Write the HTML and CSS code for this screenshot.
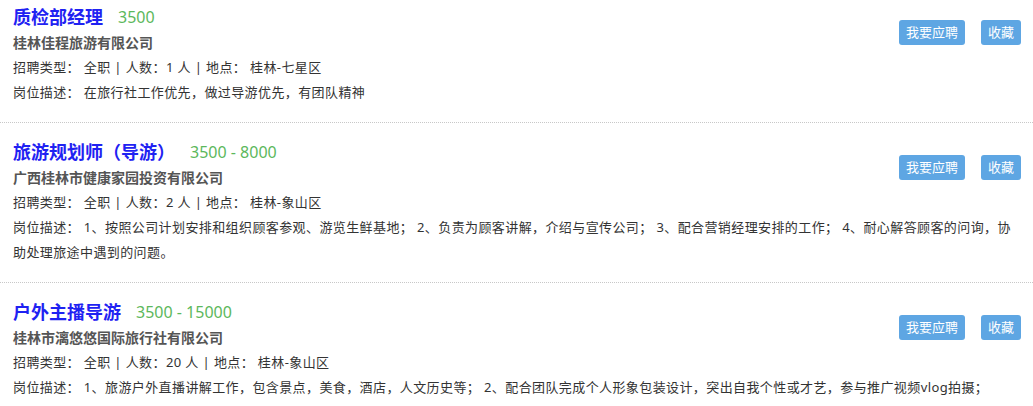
FILE: index.html
```html
<!DOCTYPE html>
<html lang="zh-CN">
<head>
<meta charset="utf-8">
<title>职位列表</title>
<link rel="stylesheet" href="styles.css">
</head>
<body>
<ul class="job-list">
  <li class="job">
    <div class="job-top">
      <div class="job-info">
        <div class="job-title"><a class="job-name">质检部经理</a><span class="salary">3500</span></div>
        <div class="company">桂林佳程旅游有限公司</div>
        <div class="meta">招聘类型： 全职 | 人数：1 人 | 地点： 桂林-七星区</div>
      </div>
      <div class="actions">
        <button class="btn">我要应聘</button>
        <button class="btn">收藏</button>
      </div>
    </div>
    <div class="desc">岗位描述： 在旅行社工作优先，做过导游优先，有团队精神</div>
  </li>
  <li class="job">
    <div class="job-top">
      <div class="job-info">
        <div class="job-title"><a class="job-name">旅游规划师（导游）</a><span class="salary">3500 - 8000</span></div>
        <div class="company">广西桂林市健康家园投资有限公司</div>
        <div class="meta">招聘类型： 全职 | 人数：2 人 | 地点： 桂林-象山区</div>
      </div>
      <div class="actions">
        <button class="btn">我要应聘</button>
        <button class="btn">收藏</button>
      </div>
    </div>
    <div class="desc">岗位描述： 1、按照公司计划安排和组织顾客参观、游览生鲜基地； 2、负责为顾客讲解，介绍与宣传公司； 3、配合营销经理安排的工作； 4、耐心解答顾客的问询，协助处理旅途中遇到的问题。</div>
  </li>
  <li class="job">
    <div class="job-top">
      <div class="job-info">
        <div class="job-title"><a class="job-name">户外主播导游</a><span class="salary">3500 - 15000</span></div>
        <div class="company">桂林市漓悠悠国际旅行社有限公司</div>
        <div class="meta">招聘类型： 全职 | 人数：20 人 | 地点： 桂林-象山区</div>
      </div>
      <div class="actions">
        <button class="btn">我要应聘</button>
        <button class="btn">收藏</button>
      </div>
    </div>
    <div class="desc">岗位描述： 1、旅游户外直播讲解工作，包含景点，美食，酒店，人文历史等； 2、配合团队完成个人形象包装设计，突出自我个性或才艺，参与推广视频vlog拍摄；</div>
  </li>
</ul>
</body>
</html>
```

FILE: styles.css
```css
html, body {
  margin: 0;
  padding: 0;
  background: #fff;
}

body {
  font-family: "Noto Sans", "Noto Sans CJK SC", sans-serif;
  color: #333;
  font-size: 13px;
}

.job-list {
  list-style: none;
  margin: 0;
  padding: 0;
}

.job {
  padding: 16px 12px 17px 13px;
  border-bottom: 1px dotted #c8c8c8;
}

.job:first-child {
  padding-top: 4px;
}

.job-top {
  display: flex;
  align-items: flex-start;
}

.job-info {
  flex: 1;
}

.job-title {
  line-height: 26px;
  height: 26px;
  display: flex;
  align-items: center;
}

.job-name {
  font-size: 18px;
  font-weight: bold;
  color: #1f22f2;
  text-decoration: none;
}

.salary {
  margin-left: 15px;
  font-size: 16px;
  color: #5cb85c;
}

.company {
  font-size: 14px;
  font-weight: bold;
  color: #555;
  line-height: 25px;
}

.meta,
.desc {
  line-height: 25px;
  letter-spacing: 0.4px;
}

.actions {
  display: flex;
  gap: 16px;
  margin-top: 16px;
}

.btn {
  font-family: inherit;
  font-size: 13px;
  color: #fff;
  background: #5ea6e3;
  border: none;
  border-radius: 3px;
  height: 25px;
  padding: 0 7px;
  line-height: 25px;
  cursor: pointer;
}
```
